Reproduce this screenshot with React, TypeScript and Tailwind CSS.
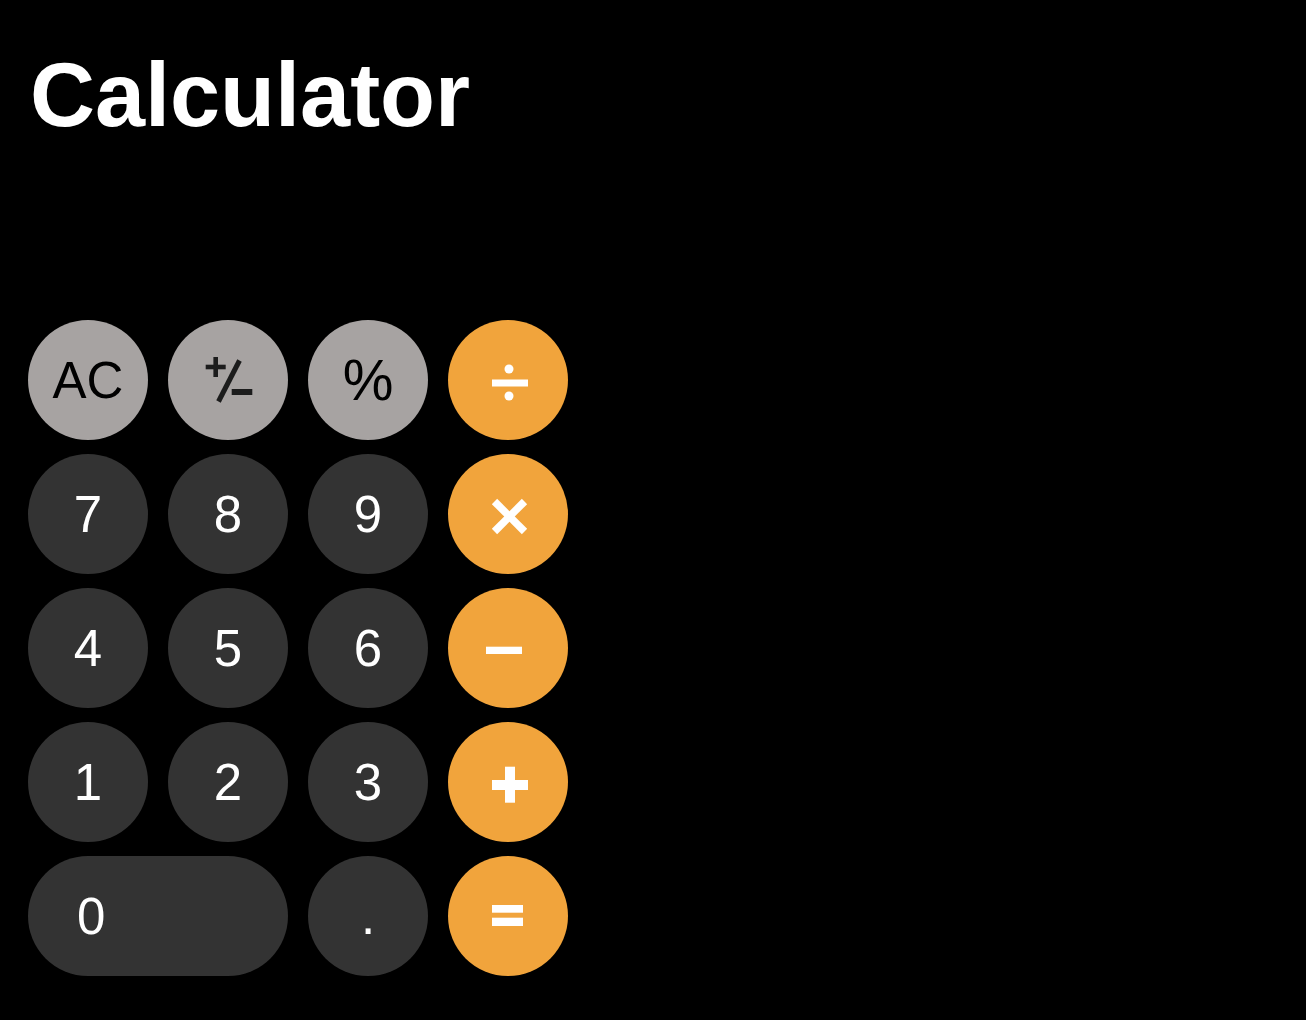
import React from "react";

type Kind = "fn" | "num" | "op";

const kindClass: Record<Kind, string> = {
  fn: "bg-[#a7a3a2] text-black",
  num: "bg-[#333333] text-white",
  op: "bg-[#f1a43c] text-white",
};

function PlusMinus() {
  return (
    <svg width="60" height="60" viewBox="0 0 60 60" className="text-[#1c1c1c]">
      {/* small plus */}
      <rect x="7.7" y="14.7" width="20" height="4.6" fill="currentColor" />
      <rect x="15.4" y="7" width="4.6" height="20" fill="currentColor" />
      {/* slash */}
      <line x1="41.5" y1="10.5" x2="20.5" y2="51.5" stroke="currentColor" strokeWidth="5" />
      {/* small minus */}
      <rect x="33.7" y="39" width="20.6" height="6" fill="currentColor" />
    </svg>
  );
}

function Divide() {
  return (
    <svg width="60" height="60" viewBox="0 0 60 60">
      <circle cx="31" cy="19" r="4.5" fill="white" />
      <rect x="14" y="29.5" width="36" height="7" fill="white" />
      <circle cx="31" cy="46" r="4.5" fill="white" />
    </svg>
  );
}

function Times() {
  return (
    <svg width="60" height="60" viewBox="0 0 60 60">
      <line x1="16.5" y1="17.5" x2="46.5" y2="47.5" stroke="white" strokeWidth="7.5" />
      <line x1="46.5" y1="17.5" x2="16.5" y2="47.5" stroke="white" strokeWidth="7.5" />
    </svg>
  );
}

function Minus() {
  return (
    <svg width="60" height="60" viewBox="0 0 60 60">
      <rect x="8" y="28.7" width="36" height="7.3" fill="white" />
    </svg>
  );
}

function Plus() {
  return (
    <svg width="60" height="60" viewBox="0 0 60 60">
      <rect x="14" y="28" width="36" height="10" fill="white" />
      <rect x="27" y="14.7" width="10" height="36" fill="white" />
    </svg>
  );
}

function Equals() {
  return (
    <svg width="60" height="60" viewBox="0 0 60 60">
      <rect x="14" y="19" width="31" height="7.7" fill="white" />
      <rect x="14" y="31.7" width="31" height="8.3" fill="white" />
    </svg>
  );
}

function Key({
  kind,
  children,
  wide = false,
}: {
  kind: Kind;
  children: React.ReactNode;
  wide?: boolean;
}) {
  return (
    <button
      className={`h-[120px] rounded-full flex items-center text-[51px] leading-none ${
        wide ? "col-span-2 justify-start pl-[49px]" : "w-[120px] justify-center"
      } ${kindClass[kind]}`}
    >
      {children}
    </button>
  );
}

export default function App() {
  return (
    <div
      className="min-h-screen w-full bg-black px-[28px] pt-[50px] pb-[28px]"
      style={{ fontFamily: '"Liberation Sans", Arial, sans-serif' }}
    >
      <h1 className="pl-[2px] text-[90px] font-bold leading-none text-white">Calculator</h1>

      <div className="mt-[180px] grid w-fit grid-cols-[repeat(4,120px)] gap-x-[20px] gap-y-[14px]">
        <Key kind="fn">AC</Key>
        <Key kind="fn">
          <PlusMinus />
        </Key>
        <Key kind="fn">
          <span className="text-[57px]">%</span>
        </Key>
        <Key kind="op">
          <Divide />
        </Key>

        <Key kind="num">7</Key>
        <Key kind="num">8</Key>
        <Key kind="num">9</Key>
        <Key kind="op">
          <Times />
        </Key>

        <Key kind="num">4</Key>
        <Key kind="num">5</Key>
        <Key kind="num">6</Key>
        <Key kind="op">
          <Minus />
        </Key>

        <Key kind="num">1</Key>
        <Key kind="num">2</Key>
        <Key kind="num">3</Key>
        <Key kind="op">
          <Plus />
        </Key>

        <Key kind="num" wide>
          0
        </Key>
        <Key kind="num">.</Key>
        <Key kind="op">
          <Equals />
        </Key>
      </div>
    </div>
  );
}
